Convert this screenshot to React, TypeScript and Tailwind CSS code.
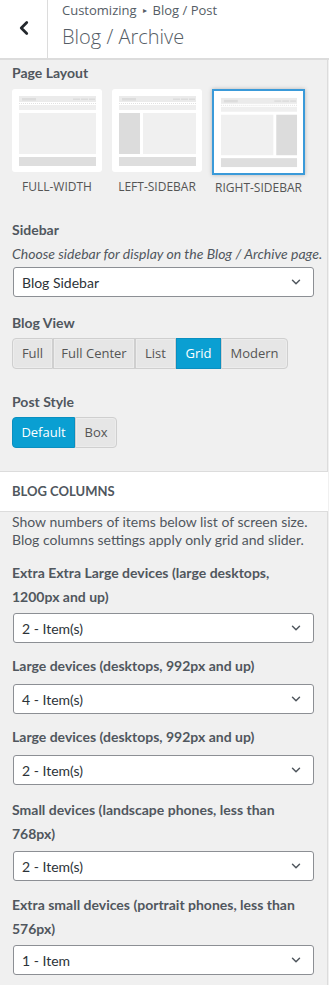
import { ChevronLeft, ChevronDown } from "lucide-react";

type Layout = "full" | "left" | "right";

const ui = { fontFamily: '"Segoe UI", Lato, "Noto Sans", sans-serif' };
const open = { fontFamily: '"Open Sans", sans-serif' };

function LayoutThumb({ kind }: { kind: Layout }) {
  return (
    <svg viewBox="0 0 90 83" className="w-full h-full">
      <rect x="0" y="0" width="90" height="83" fill="#fff" />
      <rect x="7" y="7" width="77" height="6" fill="#ebebeb" />
      <rect x="10" y="9" width="14" height="2.5" fill="#dcdcdc" />
      <rect x="61" y="9.5" width="7" height="1.5" fill="#dcdcdc" />
      <rect x="69" y="9.5" width="7" height="1.5" fill="#dcdcdc" />
      <rect x="77" y="9.5" width="6" height="1.5" fill="#dcdcdc" />
      <line x1="7" y1="14.5" x2="84" y2="14.5" stroke="#e2e2e2" strokeDasharray="1 1" />
      <rect x="7" y="16" width="77" height="5" fill="#efefef" />
      {kind === "full" && <rect x="7" y="24" width="77" height="41" fill="#f0f0f0" />}
      {kind === "left" && (
        <>
          <rect x="7" y="24" width="21" height="41" fill="#dcdcdc" />
          <rect x="31" y="24" width="53" height="41" fill="#f0f0f0" />
        </>
      )}
      {kind === "right" && (
        <>
          <rect x="7" y="24" width="53" height="41" fill="#f0f0f0" />
          <rect x="63" y="24" width="21" height="41" fill="#dcdcdc" />
        </>
      )}
      <rect x="7" y="68" width="77" height="9" fill="#dedede" />
    </svg>
  );
}

function Select({ value }: { value: string }) {
  return (
    <div className="mx-px h-[30px] bg-white border border-[#8c8f94] rounded-[3px] flex items-center justify-between pl-[8px] pr-[10px]">
      <span className="text-[14px] text-[#2c3338]" style={ui}>
        {value}
      </span>
      <ChevronDown className="w-[14px] h-[14px] text-[#50575e]" strokeWidth={2.5} />
    </div>
  );
}

function Seg({ items, active, widths }: { items: string[]; active: string; widths: string[] }) {
  return (
    <div className="flex" style={open}>
      {items.map((it, i) => {
        const on = it === active;
        return (
          <div
            key={it}
            className={`${widths[i]} h-[31px] flex items-center justify-center text-[13px] border ${
              i === 0 ? "rounded-l-[4px]" : ""
            } ${i === items.length - 1 ? "rounded-r-[4px]" : ""} ${
              on
                ? "bg-[#0a9fd2] border-[#0a8fc0] text-white"
                : "bg-[#e6e6e6] border-[#cfcfcf] text-[#555] shadow-[inset_0_0_0_1px_#ececec]"
            }`}
          >
            {it}
          </div>
        );
      })}
    </div>
  );
}

function Label({ children }: { children: React.ReactNode }) {
  return (
    <div className="text-[14px] font-bold leading-[24px] text-[#50575e] whitespace-nowrap" style={ui}>
      {children}
    </div>
  );
}

export default function App() {
  const layouts: { kind: Layout; label: string }[] = [
    { kind: "full", label: "FULL-WIDTH" },
    { kind: "left", label: "LEFT-SIDEBAR" },
    { kind: "right", label: "RIGHT-SIDEBAR" },
  ];

  return (
    <div className="w-[329px] min-h-[985px] bg-[#f0f0f0]">
      <div className="w-[328px] min-h-[985px] border-r border-[#dcdcdc]">
        {/* header */}
        <div className="h-[60px] bg-white border-b-2 border-[#dcdcdc] flex w-[329px]">
          <div className="w-[48px] border-r border-[#dcdcdc] flex items-center justify-center pb-[2px]">
            <ChevronLeft className="w-[22px] h-[22px] text-[#23282d]" strokeWidth={3} />
          </div>
          <div className="pl-[14px] pt-[1px]" style={open}>
            <div className="text-[13px] leading-[18px] text-[#555d66] flex items-center">
              Customizing
              <span className="text-[8px] mx-[6px]">▸</span>
              Blog / Post
            </div>
            <div className="text-[20px] leading-[28px] mt-[4px] text-[#555d66] font-light">Blog / Archive</div>
          </div>
        </div>

        <div className="px-[12px]">
          {/* page layout */}
          <div className="pt-[1px]">
            <Label>Page Layout</Label>
            <div className="flex gap-[10px] mt-[4px]">
              {layouts.map((l) => (
                <div key={l.kind} className="flex flex-col items-center">
                  <div
                    className={
                      l.kind === "right"
                        ? "w-[93px] h-[86px] border-2 border-[#3a9ad9] shadow-[0_0_4px_rgba(0,0,0,0.25)] bg-white"
                        : "w-[90px] h-[83px] rounded-[3px] overflow-hidden"
                    }
                  >
                    <LayoutThumb kind={l.kind} />
                  </div>
                  <div
                    className={`text-[12px] text-[#555] ${l.kind === "right" ? "mt-[4px]" : "mt-[6px]"}`}
                    style={open}
                  >
                    {l.label}
                  </div>
                </div>
              ))}
            </div>
          </div>

          {/* sidebar */}
          <div className="mt-[21px]">
            <Label>Sidebar</Label>
            <div
              className="text-[14px] italic leading-[22px] text-[#50575e] mt-[1px] mb-[2px] whitespace-nowrap"
              style={ui}
            >
              Choose sidebar for display on the Blog / Archive page.
            </div>
            <Select value="Blog Sidebar" />
          </div>

          {/* blog view */}
          <div className="mt-[14px]">
            <Label>Blog View</Label>
            <div className="mt-[3px]">
              <Seg
                items={["Full", "Full Center", "List", "Grid", "Modern"]}
                active="Grid"
                widths={["w-[41px]", "w-[82px]", "w-[41px]", "w-[45px]", "w-[67px]"]}
              />
            </div>
          </div>

          {/* post style */}
          <div className="mt-[21px]">
            <Label>Post Style</Label>
            <div className="mt-[3px]">
              <Seg items={["Default", "Box"]} active="Default" widths={["w-[63px]", "w-[42px]"]} />
            </div>
          </div>
        </div>

        {/* blog columns */}
        <div className="mt-[23px] h-[41px] bg-white border-y border-[#dcdcdc] flex items-center px-[12px] w-[328px]">
          <span className="text-[13px] font-bold text-[#50575e]" style={ui}>
            BLOG COLUMNS
          </span>
        </div>

        <div className="px-[12px]">
          <div className="text-[14px] leading-[18px] text-[#50575e] mt-[1px] whitespace-nowrap" style={ui}>
            Show numbers of items below list of screen size.
            <br />
            Blog columns settings apply only grid and slider.
          </div>

          <div className="mt-[12px]">
            <Label>
              Extra Extra Large devices (large desktops,
              <br />
              1200px and up)
            </Label>
            <div className="mt-[4px]">
              <Select value="2 - Item(s)" />
            </div>
          </div>

          <div className="mt-[11px]">
            <Label>Large devices (desktops, 992px and up)</Label>
            <div className="mt-[6px]">
              <Select value="4 - Item(s)" />
            </div>
          </div>

          <div className="mt-[11px]">
            <Label>Large devices (desktops, 992px and up)</Label>
            <div className="mt-[6px]">
              <Select value="2 - Item(s)" />
            </div>
          </div>

          <div className="mt-[13px]">
            <Label>
              Small devices (landscape phones, less than
              <br />
              768px)
            </Label>
            <div className="mt-[5px]">
              <Select value="2 - Item(s)" />
            </div>
          </div>

          <div className="mt-[12px]">
            <Label>
              Extra small devices (portrait phones, less than
              <br />
              576px)
            </Label>
            <div className="mt-[4px]">
              <Select value="1 - Item" />
            </div>
          </div>
        </div>
      </div>
    </div>
  );
}
